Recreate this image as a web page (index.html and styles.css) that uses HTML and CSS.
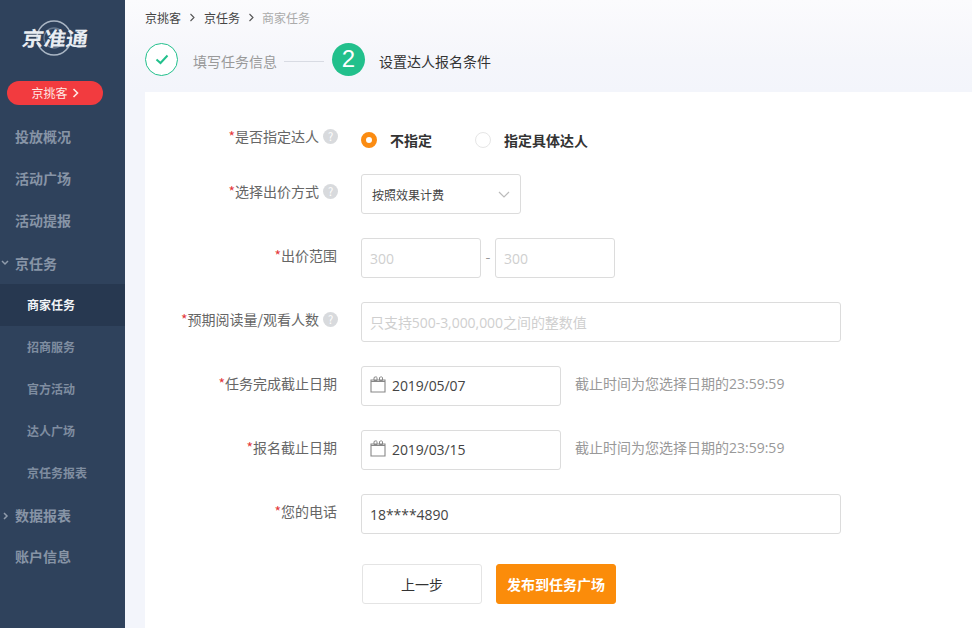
FILE: index.html
```html
<!DOCTYPE html>
<html lang="zh">
<head>
<meta charset="utf-8">
<title>京任务</title>
<link rel="stylesheet" href="styles.css">
</head>
<body>
<div class="app">
  <aside class="sidebar">
    <div class="logo">
      <svg class="logo-ring" width="40" height="40" viewBox="0 0 40 40"><circle cx="20" cy="20" r="17" fill="none" stroke="#aab6c4" stroke-width="1.6"/><circle cx="20" cy="20" r="10" fill="none" stroke="#66788e" stroke-width="1.4"/></svg>
      <span class="logo-text">京准通</span>
    </div>
    <a class="pill">京挑客<svg class="pill-arrow" width="7" height="10" viewBox="0 0 7 10"><path d="M1.500 1l4 4-4 4" fill="none" stroke="#ffe9e4" stroke-width="1.600"/></svg></a>
    <nav class="nav">
      <div class="nav-item">投放概况</div>
      <div class="nav-item">活动广场</div>
      <div class="nav-item">活动提报</div>
      <div class="nav-item has-caret"><svg class="caret" width="8" height="6" viewBox="0 0 8 6"><path d="M1 1l3 3 3-3" fill="none" stroke="#8f9bab" stroke-width="1.500"/></svg>京任务</div>
      <div class="nav-sub active">商家任务</div>
      <div class="nav-sub">招商服务</div>
      <div class="nav-sub">官方活动</div>
      <div class="nav-sub">达人广场</div>
      <div class="nav-sub">京任务报表</div>
      <div class="nav-item has-caret"><svg class="caret caret-right" width="6" height="8" viewBox="0 0 6 8"><path d="M1 1l3 3-3 3" fill="none" stroke="#8f9bab" stroke-width="1.500"/></svg>数据报表</div>
      <div class="nav-item">账户信息</div>
    </nav>
  </aside>
  <main class="main">
    <div class="crumbs">
      <span>京挑客</span><svg class="sep" width="6" height="9" viewBox="0 0 6 9"><path d="M1 1l3.500 3.500L1 8" fill="none" stroke="#555" stroke-width="1.100"/></svg><span>京任务</span><svg class="sep" width="6" height="9" viewBox="0 0 6 9"><path d="M1 1l3.500 3.500L1 8" fill="none" stroke="#555" stroke-width="1.100"/></svg><span class="current">商家任务</span>
    </div>
    <div class="steps">
      <span class="step-done"><svg width="14" height="11" viewBox="0 0 14 11"><path d="M1.500 5.500l4 3.500 7-7.500" fill="none" stroke="#22c08c" stroke-width="2"/></svg></span>
      <span class="step-label muted">填写任务信息</span>
      <span class="step-line"></span>
      <span class="step-num">2</span>
      <span class="step-label">设置达人报名条件</span>
    </div>
    <form class="card">
      <div class="row row-radio">
        <label class="label"><i>*</i>是否指定达人<span class="help">?</span></label>
        <span class="radio on"></span><b class="radio-text first">不指定</b>
        <span class="radio"></span><b class="radio-text">指定具体达人</b>
      </div>
      <div class="row">
        <label class="label"><i>*</i>选择出价方式<span class="help">?</span></label>
        <div class="field select"><span>按照效果计费</span><svg width="12" height="7" viewBox="0 0 12 7"><path d="M1 1l5 5 5-5" fill="none" stroke="#bbb" stroke-width="1.200"/></svg></div>
      </div>
      <div class="row">
        <label class="label"><i>*</i>出价范围</label>
        <div class="field range placeholder">300</div>
        <span class="dash">-</span>
        <div class="field range placeholder">300</div>
      </div>
      <div class="row">
        <label class="label"><i>*</i>预期阅读量/观看人数<span class="help">?</span></label>
        <div class="field wide placeholder">只支持500-3,000,000之间的整数值</div>
      </div>
      <div class="row">
        <label class="label"><i>*</i>任务完成截止日期</label>
        <div class="field date"><svg class="cal" width="16" height="17" viewBox="0 0 16 17"><path d="M1 4h14v12H1z M1 5.500h14" fill="none" stroke="#888" stroke-width="1.100"/><path d="M4 1.500c1.500-.8 2.500-.8 3 0v3H4z M9.500 1.500c1.500-.8 2.500-.8 3 0v3h-3z" fill="none" stroke="#888" stroke-width="1"/></svg><span class="date-text">2019/05/07</span></div>
        <span class="hint">截止时间为您选择日期的23:59:59</span>
      </div>
      <div class="row">
        <label class="label"><i>*</i>报名截止日期</label>
        <div class="field date"><svg class="cal" width="16" height="17" viewBox="0 0 16 17"><path d="M1 4h14v12H1z M1 5.500h14" fill="none" stroke="#888" stroke-width="1.100"/><path d="M4 1.500c1.500-.8 2.500-.8 3 0v3H4z M9.500 1.500c1.500-.8 2.500-.8 3 0v3h-3z" fill="none" stroke="#888" stroke-width="1"/></svg><span class="date-text">2019/03/15</span></div>
        <span class="hint">截止时间为您选择日期的23:59:59</span>
      </div>
      <div class="row">
        <label class="label"><i>*</i>您的电话</label>
        <div class="field wide">18****4890</div>
      </div>
      <div class="actions">
        <button type="button" class="btn">上一步</button>
        <button type="button" class="btn primary">发布到任务广场</button>
      </div>
    </form>
  </main>
</div>
</body>
</html>
```
FILE: styles.css
```css
* { box-sizing: border-box; }
html, body { margin: 0; height: 100%; overflow: hidden; }
body {
  font-family: "Noto Sans CJK SC", "Open Sans", sans-serif;
  font-size: 14px;
  color: #333;
  background: #fff;
}
.app { display: flex; height: 628px; }

.sidebar {
  width: 125px;
  flex: none;
  background: #2f425c;
  display: flex;
  flex-direction: column;
}
.logo {
  height: 81px;
  position: relative;
  display: flex;
  justify-content: center;
  padding: 23px 15px 0 0;
}
.logo-ring { position: absolute; left: 34px; top: 18px; }
.logo-text {
  position: relative;
  height: 30px;
  font-size: 20px;
  line-height: 30px;
  font-weight: 700;
  color: #e9edf2;
  transform: skewX(-8deg) scaleX(1.1);
}
.pill {
  margin-left: 7px;
  width: 96px;
  height: 24px;
  border-radius: 12px;
  background: #f23b3f;
  color: #ffe9e4;
  font-size: 12px;
  line-height: 22px;
  display: flex;
  align-items: center;
  justify-content: center;
  gap: 4px;
}
.nav { margin-top: 11px; }
.nav-item {
  height: 42px;
  line-height: 40px;
  padding-left: 15px;
  font-size: 14px;
  font-weight: 700;
  color: #8794a6;
  position: relative;
}
.nav-item.has-caret { line-height: 43px; }
.nav-sub {
  height: 42px;
  line-height: 41px;
  padding-left: 27px;
  font-size: 12px;
  font-weight: 700;
  color: #7f8da0;
}
.nav-sub.active { background: #273850; color: #f2f5f8; }
.caret { position: absolute; left: 1px; top: 18px; }
.caret-right { left: 3px; top: 18px; }

.main {
  flex: 1;
  min-width: 0;
  padding-left: 20px;
  background: linear-gradient(#fbfbfd 0, #f5f6fb 60px, #f3f5fb 92px);
}
.crumbs {
  height: 36px;
  padding-bottom: 1px;
  display: flex;
  align-items: center;
  font-size: 12px;
  color: #444;
}
.crumbs .sep { margin: 0 6px 0 6px; width: 11px; }
.crumbs .current { color: #aaa; margin-left: -1px; }

.steps {
  height: 56px;
  display: flex;
  align-items: center;
  padding-bottom: 9px;
}
.step-done {
  width: 33px;
  height: 33px;
  border: 1px solid #22c08c;
  border-radius: 50%;
  display: flex;
  align-items: center;
  justify-content: center;
  background: #fff;
}
.step-label { font-size: 14px; color: #333; line-height: 20px; margin: 3px 0 0 15px; }
.step-num + .step-label { margin-left: 14px; }
.step-label.muted { color: #999; }
.step-line { width: 40px; height: 1px; background: #d8dbe3; margin: 3px 8px 0 7px; }
.step-num {
  width: 33px;
  height: 33px;
  border-radius: 50%;
  background: #22c08c;
  color: #fff;
  font-family: "Liberation Sans", sans-serif;
  font-size: 24px;
  line-height: 32px;
  text-align: center;
}

.card {
  background: #fff;
  height: 536px;
  padding-top: 27px;
}
.row {
  height: 40px;
  display: flex;
  align-items: center;
  margin-bottom: 24px;
}
.row-radio { height: 42px; margin-bottom: 13px; }
.label {
  width: 192px;
  flex: none;
  margin-right: 24px;
  position: relative;
  top: -3px;
  text-align: right;
  font-size: 14px;
  line-height: 20px;
  color: #666;
  white-space: nowrap;
}
.row-radio .label { top: -4px; }
.label i { font-style: normal; color: #e4393c; }
.help {
  display: inline-block;
  width: 15px;
  height: 15px;
  margin: 0 -1px 0 4px;
  vertical-align: 1px;
  border-radius: 50%;
  background: #d8dadd;
  color: #fff;
  font-size: 11px;
  line-height: 15px;
  text-align: center;
}
.radio {
  width: 16px;
  height: 16px;
  border-radius: 50%;
  border: 1px solid #e6e6e6;
  background: #fff;
  flex: none;
}
.radio.on { border: 5px solid #fb8c12; }
.radio-text {
  font-size: 14px;
  color: #333;
  margin-left: 13px;
}
.radio-text.first { margin-right: 43px; }
.field {
  height: 40px;
  border: 1px solid #dcdcdc;
  border-radius: 3px;
  background: #fff;
  padding: 0 8px;
  display: flex;
  align-items: center;
  font-size: 14px;
  color: #444;
}
.placeholder { color: #cfcfcf; }
.select {
  width: 160px;
  justify-content: space-between;
  padding: 0 10px;
  font-size: 12px;
}
.range { width: 120px; font-family: "Open Sans", sans-serif; }
.dash { width: 14px; text-align: center; color: #999; position: relative; top: -2px; }
.wide { width: 480px; font-family: "Open Sans", "Noto Sans CJK SC", sans-serif; letter-spacing: -.05px; }
.date { width: 200px; font-family: "Open Sans", sans-serif; letter-spacing: -.1px; }
.date-text { line-height: 18px; margin-top: -1px; }
.cal { margin-right: 6px; flex: none; position: relative; top: -2px; }
.hint { margin-left: 14px; font-family: "Open Sans", "Noto Sans CJK SC", sans-serif; font-size: 14px; color: #999; position: relative; top: -3px; }
.actions {
  display: flex;
  gap: 14px;
  margin-left: 217px;
  margin-top: 30px;
}
.btn {
  width: 120px;
  height: 40px;
  border: 1px solid #e4e4e4;
  border-radius: 3px;
  background: #fff;
  color: #333;
  font: 14px "Noto Sans CJK SC", sans-serif;
}
.btn.primary {
  background: #fb8c0a;
  border-color: #fb8c0a;
  color: #fff;
  font-weight: 700;
}
```
